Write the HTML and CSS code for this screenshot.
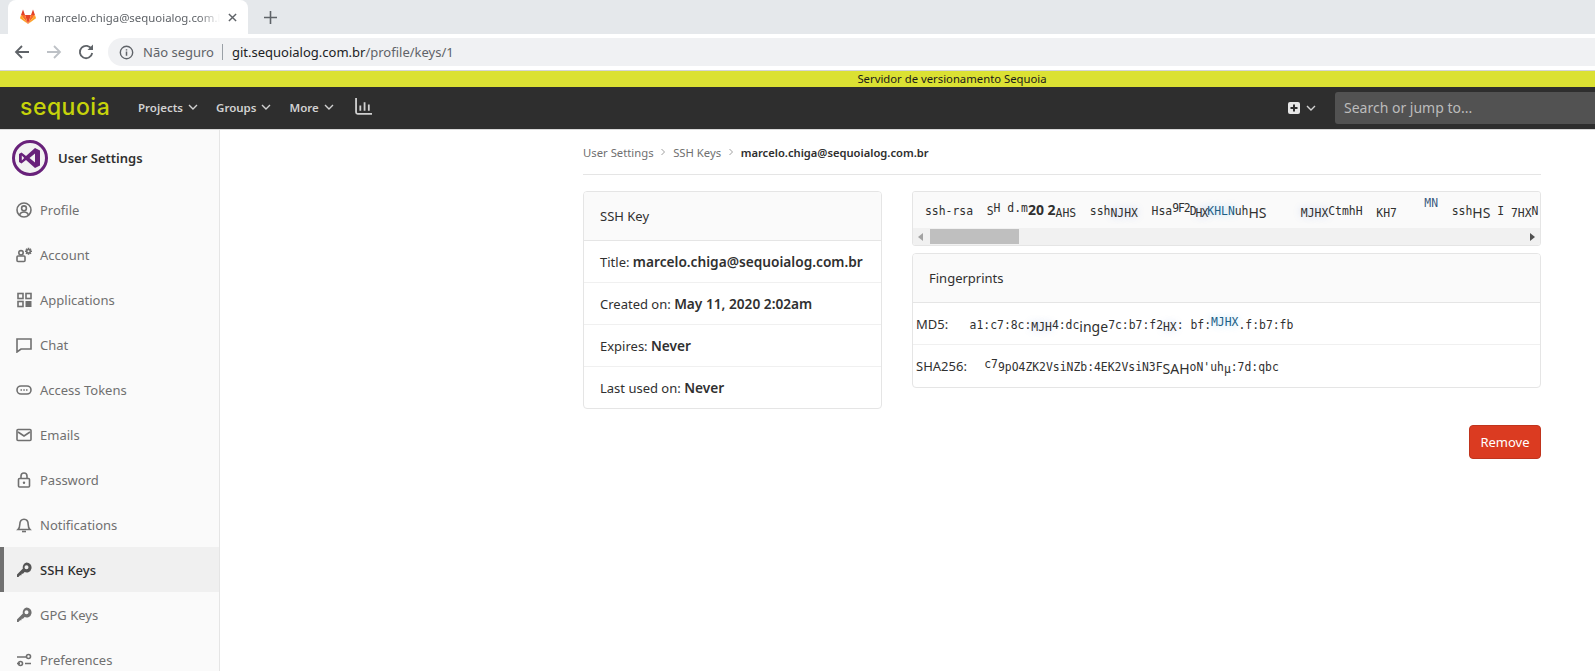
FILE: index.html
```html
<!DOCTYPE html>
<html lang="en">
<head>
    <meta charset="UTF-8">
    <title>marcelo.chiga@sequoialog.com.br - SSH Keys</title>
    <link rel="stylesheet" href="styles.css">
</head>
<body>
<div class="page">
    <!-- browser chrome -->
    <div class="tabstrip">
        <div class="tab">
            <svg class="favicon" viewBox="0 0 16 16">
                <polygon points="8,15 11,6 5,6" fill="#e24329"/>
                <polygon points="8,15 5,6 1,6" fill="#fc6d26"/>
                <polygon points="8,15 11,6 15,6" fill="#fc6d26"/>
                <polygon points="1,6 0,9.2 8,15" fill="#fca326"/>
                <polygon points="15,6 16,9.2 8,15" fill="#fca326"/>
                <polygon points="1,6 5,6 3,0.5" fill="#e24329"/>
                <polygon points="15,6 11,6 13,0.5" fill="#e24329"/>
            </svg>
            <span class="tab-title">marcelo.chiga@sequoialog.com.br</span>
            <svg class="tab-close" viewBox="0 0 10 10"><path d="M1 1l8 8M9 1l-8 8" stroke="#5f6368" stroke-width="1.6"/></svg>
        </div>
        <svg class="new-tab" viewBox="0 0 14 14"><path d="M7 0v14M0 7h14" stroke="#5f6368" stroke-width="1.7"/></svg>
    </div>
    <div class="toolbar">
        <svg class="tool-icon" viewBox="0 0 16 16"><path d="M15 8H2M8 2L2 8l6 6" fill="none" stroke="#5f6368" stroke-width="1.8"/></svg>
        <svg class="tool-icon" viewBox="0 0 16 16"><path d="M1 8h13M8 2l6 6-6 6" fill="none" stroke="#bdc1c6" stroke-width="1.8"/></svg>
        <svg class="tool-icon" viewBox="0 0 16 16"><path d="M13.6 5.2A6.2 6.2 0 1 0 14.2 9" fill="none" stroke="#5f6368" stroke-width="1.8"/><path d="M9.5 6H15V.5z" fill="#5f6368"/></svg>
        <div class="omnibox">
            <svg class="info-icon" viewBox="0 0 16 16"><circle cx="8" cy="8" r="6.6" fill="none" stroke="#5f6368" stroke-width="1.5"/><path d="M8 7v4.5M8 4.4v1.5" stroke="#5f6368" stroke-width="1.6"/></svg>
            <span class="not-secure">Não seguro</span>
            <span class="url"><b>git.sequoialog.com.br</b>/profile/keys/1</span>
        </div>
    </div>

    <!-- app -->
    <div class="banner">Servidor de versionamento Sequoia</div>
    <nav class="navbar">
        <span class="logo">sequoia</span>
        <a class="nav-link">Projects <svg class="chev" viewBox="0 0 12 12"><path d="M2 4l4 4 4-4"/></svg></a>
        <a class="nav-link">Groups <svg class="chev" viewBox="0 0 12 12"><path d="M2 4l4 4 4-4"/></svg></a>
        <a class="nav-link">More <svg class="chev" viewBox="0 0 12 12"><path d="M2 4l4 4 4-4"/></svg></a>
        <svg class="nav-chart" viewBox="0 0 16 16"><path d="M1 0v13.5a1.5 1.5 0 0 0 1.5 1.5H16M5 7v5M9 4v8M13 6v6" fill="none" stroke="#d1d1d1" stroke-width="1.7"/></svg>
        <div class="nav-right">
            <svg class="plus-box" viewBox="0 0 12 12"><rect width="12" height="12" rx="2" fill="#e6e6e6"/><path d="M6 2.5v7M2.5 6h7" stroke="#2e2e2e" stroke-width="2"/></svg>
            <svg class="chev" viewBox="0 0 12 12"><path d="M2 4l4 4 4-4"/></svg>
            <div class="search">Search or jump to...</div>
        </div>
    </nav>

    <div class="layout">
        <aside class="sidebar">
            <div class="side-head">
                <svg class="avatar" viewBox="0 0 36 36">
                    <circle cx="18" cy="18" r="16.5" fill="#f2f2f2" stroke="#68217a" stroke-width="3"/>
                    <path d="M23 8l5 2.5v15L23 28l-9-8-4.5 3.5L7 22v-8l2.5-1.5L14 16zM23 13.5L17.5 18l5.5 4.5zM9.8 15.5v5l2.4-2.5z" fill="#68217a" fill-rule="evenodd"/>
                </svg>
                <span class="side-title">User Settings</span>
            </div>
            <a class="side-item"><svg viewBox="0 0 16 16"><circle cx="8" cy="8" r="7" class="ln"/><circle cx="8" cy="6.3" r="2.4" class="ln"/><path d="M3.5 12.8c1-2 2.6-2.8 4.5-2.8s3.5.8 4.5 2.8" class="ln"/></svg>Profile</a>
            <a class="side-item"><svg viewBox="0 0 16 16"><circle cx="5" cy="5.8" r="2.2" class="ln"/><rect x="1" y="9" width="8" height="5.500" rx="1" class="ln"/><circle cx="12.500" cy="4.300" r="1.800" class="ln"/><path d="M12.500 .8v1.400M12.500 6.400v1.400M9 4.300h1.400M14.600 4.300H16M10 1.800l1 1M14 5.800l1 1M10 6.800l1-1M14 2.800l1-1" class="ln"/></svg>Account</a>
            <a class="side-item"><svg viewBox="0 0 16 16"><rect x="2" y="1.500" width="5" height="5" class="ln"/><rect x="10" y="1.500" width="5" height="5" class="ln"/><rect x="2" y="9.500" width="5" height="5" class="ln"/><rect x="9.500" y="9" width="6" height="6" class="fl"/></svg>Applications</a>
            <a class="side-item"><svg viewBox="0 0 16 16"><path d="M1 2h14v10H5l-4 3z" class="ln"/></svg>Chat</a>
            <a class="side-item"><svg viewBox="0 0 16 16"><rect x="1" y="4" width="14" height="8" rx="4" class="ln"/><path d="M4.500 8h1.500M7.300 8h1.500M10 8h1.500" class="ln"/></svg>Access Tokens</a>
            <a class="side-item"><svg viewBox="0 0 16 16"><rect x="1" y="2.500" width="14" height="11" rx="1" class="ln"/><path d="M2 5l6 4 6-4" class="ln"/></svg>Emails</a>
            <a class="side-item"><svg viewBox="0 0 16 16"><rect x="2.500" y="6.500" width="11" height="8.500" rx="1" class="ln"/><path d="M5 6.500V4a3 3 0 0 1 6 0v2.500" class="ln"/><circle cx="8" cy="10.700" r="1.200" class="fl"/></svg>Password</a>
            <a class="side-item"><svg viewBox="0 0 16 16"><path d="M2 12.500h12c-1.500-1.500-1.800-3-1.800-5C12.200 4 10.500 2.200 8 2.200S3.800 4 3.800 7.500c0 2-.3 3.500-1.800 5z" class="ln"/><path d="M6 14.500h4" class="ln"/></svg>Notifications</a>
            <a class="side-item active"><svg viewBox="0 0 16 16"><path d="M10.500.5a5 5 0 1 1-1.900 9.600L7 11.700H5.500v1.500H4L2.500 15H1v-2.500l5.900-5.900A5 5 0 0 1 10.500.5zm0 2.800a2 2 0 1 0 0 4 2 2 0 0 0 0-4z" class="fl" fill-rule="evenodd"/></svg>SSH Keys</a>
            <a class="side-item"><svg viewBox="0 0 16 16"><path d="M10.500.5a5 5 0 1 1-1.900 9.600L7 11.700H5.500v1.500H4L2.500 15H1v-2.500l5.900-5.900A5 5 0 0 1 10.500.5zm0 2.800a2 2 0 1 0 0 4 2 2 0 0 0 0-4z" class="fl" fill-rule="evenodd"/></svg>GPG Keys</a>
            <a class="side-item"><svg viewBox="0 0 16 16"><path d="M1 5h9M1 11.500h3M9 11.500h6" class="ln"/><circle cx="12.500" cy="4.500" r="2" class="ln"/><circle cx="4.500" cy="11.500" r="2" class="ln"/></svg>Preferences</a>
        </aside>

        <main class="content">
            <div class="container">
                <div class="breadcrumbs">
                    <a>User Settings</a>
                    <svg class="crumb-sep" viewBox="0 0 8 8"><path d="M2.500 1l3 3-3 3"/></svg>
                    <a>SSH Keys</a>
                    <svg class="crumb-sep" viewBox="0 0 8 8"><path d="M2.500 1l3 3-3 3"/></svg>
                    <strong>marcelo.chiga@sequoialog.com.br</strong>
                </div>
                <div class="key-grid">
                    <div class="card">
                        <div class="card-head">SSH Key</div>
                        <div class="card-row">Title: <strong>marcelo.chiga@sequoialog.com.br</strong></div>
                        <div class="card-row">Created on: <strong>May 11, 2020 2:02am</strong></div>
                        <div class="card-row">Expires: <strong>Never</strong></div>
                        <div class="card-row">Last used on: <strong>Never</strong></div>
                    </div>
                    <div class="right-col">
                        <div class="key-box">
                            <pre class="key-text">ssh-rsa  S<span class="up">H d.m</span><b class="big">20 2</b><span class="dn">AHS</span>  ssh<span class="dn smudge">NJHX</span>  Hsa<span class="squeeze"><span class="up">9F2</span>D<span class="dn smudge">HX</span></span><span class="blue">KHLN</span>uh<span class="dn big-n">HS</span>     <span class="dn smudge">MJHX</span>CtmhH  <span class="dn">KH7</span>    <span class="up2">MN</span>  ssh<span class="dn big-n">HS</span> I <span class="dn">7HX</span>N</pre>
                            <div class="scrollbar">
                                <span class="arrow-left"></span>
                                <span class="thumb"></span>
                                <span class="arrow-right"></span>
                            </div>
                        </div>
                        <div class="card">
                            <div class="card-head">Fingerprints</div>
                            <div class="card-row tight">MD5: <code>a1:c7:8c:<span class="dn smudge">MJH</span>4:dc<span class="dn big-n">inge</span>7c:b7:f2<span class="dn smudge">HX</span>: bf:<span class="up blue">MJHX</span>.f:b7:fb</code></div>
                            <div class="card-row tight">SHA256: <code><span class="up">c7</span>9pO4Z<span>K2VsiNZ</span>b:4EK2VsiN3F<span class="big-n">SAH</span>oN'uh<span class="dn">µ</span>:7d:qbc</code></div>
                        </div>
                        <div class="actions">
                            <button class="btn-remove">Remove</button>
                        </div>
                    </div>
                </div>
            </div>
        </main>
    </div>
</div>
</body>
</html>
```

FILE: styles.css
```css
/* General */
html, body {
    margin: 0;
    padding: 0;
    height: 671px;
    overflow: hidden;
    background: #fff;
}

.page {
    width: 1904px;
    font-family: 'Noto Sans', 'Open Sans', sans-serif;
    font-size: 13px;
    color: #303030;
}

/* Browser chrome */
.tabstrip {
    height: 34px;
    background: #e5e8eb;
    display: flex;
    align-items: flex-end;
    padding-left: 8px;
}

.tab {
    width: 240px;
    height: 34px;
    box-sizing: border-box;
    background: #fff;
    border-radius: 8px 8px 0 0;
    display: flex;
    align-items: center;
    padding: 0 12px;
}

.favicon {
    width: 16px;
    height: 16px;
    margin-right: 8px;
    flex: none;
}

.tab-title {
    width: 176px;
    flex: none;
    overflow: hidden;
    white-space: nowrap;
    font-size: 11.4px;
    color: #5f6368;
    -webkit-mask-image: linear-gradient(to right, #000 88%, transparent);
    mask-image: linear-gradient(to right, #000 88%, transparent);
}

.tab-close {
    width: 9px;
    height: 9px;
    margin-left: 8px;
    flex: none;
}

.new-tab {
    width: 13px;
    height: 13px;
    margin: 0 0 10px 16px;
}

.toolbar {
    height: 36px;
    box-sizing: border-box;
    padding-top: 4px;
    display: flex;
    align-items: flex-start;
    background: #fff;
}

.tool-icon {
    width: 16px;
    height: 16px;
    margin: 6px 0 0 14px;
}

.tool-icon + .tool-icon {
    margin-left: 16px;
}

.omnibox {
    flex: 1;
    height: 28px;
    margin-left: 14px;
    background: #f0f1f3;
    border-radius: 14px 0 0 14px;
    display: flex;
    align-items: center;
    padding-left: 11px;
    font-size: 13px;
    white-space: nowrap;
}

.info-icon {
    width: 15px;
    height: 15px;
    margin-right: 9px;
}

.not-secure {
    color: #5f6368;
    padding-right: 8px;
    margin-right: 9px;
    border-right: 1px solid #9aa0a6;
    line-height: 16px;
}

.url {
    color: #5f6368;
}

.url b {
    color: #202124;
    font-weight: 400;
}

/* App header */
.banner {
    height: 16px;
    margin-top: 1px;
    background: #dbe133;
    color: #1a1a1a;
    text-align: center;
    font-size: 11.3px;
    line-height: 16px;
    box-shadow: 0 -1px 0 #d5d5d5;
}

.navbar {
    height: 43px;
    box-sizing: border-box;
    background: #2e2e2e;
    display: flex;
    align-items: center;
    padding-left: 20px;
    border-bottom: 1px solid #d9d9d9;
}

.logo {
    width: 118px;
    margin-bottom: 2px;
    font-family: 'Inter', sans-serif;
    font-size: 23px;
    font-weight: 500;
    line-height: 24px;
    letter-spacing: .5px;
    color: #c6d30a;
}

.nav-link {
    display: flex;
    align-items: center;
    gap: 4px;
    margin: 0 17px 2px 0;
    color: #d1d1d1;
    font-size: 11.5px;
    font-weight: 600;
}

.chev {
    width: 12px;
    height: 12px;
    fill: none;
    stroke: #d1d1d1;
    stroke-width: 1.4;
}

.nav-chart {
    width: 17px;
    height: 17px;
    margin: 0 0 3px 3px;
}

.nav-right {
    display: flex;
    align-items: center;
    margin-left: auto;
    width: 616px;
}

.plus-box {
    width: 12px;
    height: 12px;
    margin-right: 5px;
}

.search {
    width: 569px;
    height: 32px;
    margin-left: 18px;
    padding-left: 9px;
    box-sizing: border-box;
    background: #525252;
    border-radius: 3px;
    color: #bcbcbc;
    font-size: 14px;
    line-height: 32px;
}

/* Layout */
.layout {
    display: flex;
    height: 541px;
}

.sidebar {
    width: 220px;
    flex: none;
    box-sizing: border-box;
    background: #fafafa;
    border-right: 1px solid #e5e5e5;
}

.side-head {
    height: 57px;
    padding: 10px 0 0 12px;
    box-sizing: border-box;
    display: flex;
    align-items: flex-start;
}

.avatar {
    width: 36px;
    height: 36px;
    margin-right: 10px;
}

.side-title {
    font-size: 13px;
    font-weight: 600;
    line-height: 36px;
}

.side-item {
    height: 45px;
    box-sizing: border-box;
    padding-left: 16px;
    display: flex;
    align-items: center;
    color: #707070;
    font-size: 13px;
}

.side-item svg {
    width: 16px;
    height: 16px;
    margin-right: 8px;
    flex: none;
}

.side-item .ln {
    fill: none;
    stroke: #707070;
    stroke-width: 1.6;
}

.side-item .fl {
    fill: #707070;
}

.side-item.active {
    background: #f0f0f0;
    border-left: 4px solid #707070;
    padding-left: 12px;
    color: #2e2e2e;
    font-weight: 500;
}

.side-item.active .fl {
    fill: #555;
}

/* Content */
.content {
    flex: 1;
}

.container {
    width: 990px;
    box-sizing: border-box;
    margin: 0 auto;
    padding: 0 16px;
}

.breadcrumbs {
    height: 45px;
    box-sizing: border-box;
    border-bottom: 1px solid #e5e5e5;
    display: flex;
    align-items: center;
    font-size: 11.3px;
    color: #707070;
}

.breadcrumbs strong {
    color: #2e2e2e;
    font-size: 11.2px;
    font-weight: 600;
}

.crumb-sep {
    width: 8px;
    height: 8px;
    margin: 0 6px 0 5.5px;
    fill: none;
    stroke: #a0a0a0;
    stroke-width: 1;
}

.key-grid {
    display: grid;
    grid-template-columns: 299px 1fr;
    gap: 30px;
    margin-top: 16px;
    align-items: start;
}

.card {
    border: 1px solid #e5e5e5;
    border-radius: 4px;
    overflow: hidden;
}

.card-head {
    height: 49px;
    box-sizing: border-box;
    padding: 0 16px;
    background: #fafafa;
    border-bottom: 1px solid #e5e5e5;
    line-height: 48px;
}

.card-row {
    height: 42px;
    box-sizing: border-box;
    padding: 0 16px;
    border-bottom: 1px solid #f0f0f0;
    line-height: 41px;
    white-space: nowrap;
}

.card-row:last-child {
    border-bottom: 0;
    height: 41px;
    line-height: 42px;
}

.card-row.tight {
    padding: 0 3px;
}

.card-row.tight:last-child {
    height: 42px;
}

.card-row strong {
    font-size: 13.7px;
    font-weight: 600;
}

code, .key-text {
    font-family: 'DejaVu Sans Mono', 'Liberation Mono', monospace;
    font-size: 11.4px;
    color: #303030;
}

code {
    margin-left: 18px;
}

.card-row:last-child code {
    margin-left: 14px;
}

.right-col {
    min-width: 0;
}

.key-box {
    border: 1px solid #e5e5e5;
    border-radius: 3px;
    overflow: hidden;
    margin-bottom: 7px;
}

.key-text {
    margin: 0;
    height: 36px;
    padding: 0 12px;
    line-height: 36px;
    background: #fafafa;
    overflow: hidden;
    white-space: pre;
}

.squeeze {
    letter-spacing: -1px;
}

.up {
    position: relative;
    top: -3px;
}

.up2 {
    position: relative;
    top: -8px;
    color: #3b5a80;
}

.dn {
    position: relative;
    top: 2px;
}

.smudge {
    text-shadow: 0 0 7px rgba(90, 130, 220, .35);
}

.big {
    font-size: 14px;
    font-family: 'Noto Sans', sans-serif;
}

.big-n {
    font-size: 14px;
    font-family: 'Noto Sans', sans-serif;
    position: relative;
    top: 3px;
}

.blue {
    color: #1c5f86;
    text-shadow: 0 0 7px rgba(60, 170, 240, .4);
}

.scrollbar {
    height: 17px;
    background: #f1f1f1;
    display: flex;
    align-items: center;
}

.arrow-left {
    width: 0;
    height: 0;
    margin-left: 5px;
    border: 4px solid transparent;
    border-left: 0;
    border-right: 5px solid #a3a3a3;
}

.thumb {
    width: 89px;
    height: 15px;
    margin-left: 7px;
    background: #bfbfbf;
}

.arrow-right {
    width: 0;
    height: 0;
    margin-left: auto;
    margin-right: 5px;
    border: 4px solid transparent;
    border-right: 0;
    border-left: 5px solid #505050;
}

.actions {
    display: flex;
    justify-content: flex-end;
    margin-top: 37px;
}

.btn-remove {
    width: 72px;
    height: 34px;
    background: #db3b21;
    border: 1px solid #c0341d;
    border-radius: 4px;
    color: #fff;
    font-family: inherit;
    font-size: 13px;
    padding: 0;
}
```
